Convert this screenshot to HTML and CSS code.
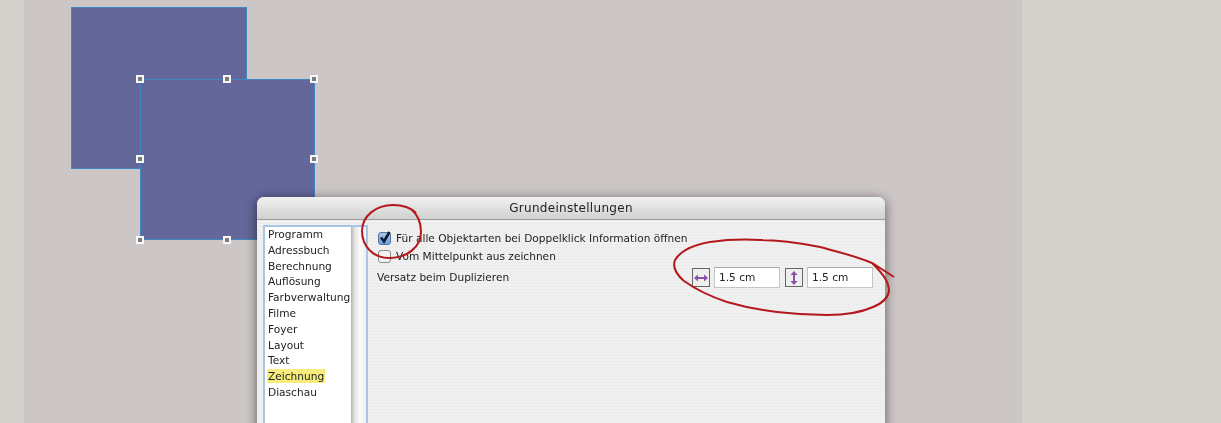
FILE: index.html
```html
<!DOCTYPE html>
<html lang="de">
<head>
<meta charset="utf-8">
<title>Grundeinstellungen</title>
<link rel="stylesheet" href="styles.css">
</head>
<body>
<div class="stage">
  <div class="strip strip-left"></div>
  <main class="canvas">
    <div class="shape shape-back"></div>
    <div class="shape shape-front">
      <i class="handle h-tl"></i><i class="handle h-tc"></i><i class="handle h-tr"></i>
      <i class="handle h-ml"></i><i class="handle h-mr"></i>
      <i class="handle h-bl"></i><i class="handle h-bc"></i>
    </div>
  </main>
  <div class="strip strip-right"></div>

  <section class="dialog">
    <header class="titlebar">Grundeinstellungen</header>
    <div class="dialog-body">
      <nav class="sidebar">
        <ul class="list">
          <li>Programm</li>
          <li>Adressbuch</li>
          <li>Berechnung</li>
          <li>Auflösung</li>
          <li>Farbverwaltung</li>
          <li>Filme</li>
          <li>Foyer</li>
          <li>Layout</li>
          <li>Text</li>
          <li><span class="selected">Zeichnung</span></li>
          <li>Diaschau</li>
        </ul>
        <div class="scrolltrack"></div>
      </nav>
      <div class="panel">
        <div class="check-row">
          <span class="box box-on">
            <svg viewBox="0 0 14 14" width="14" height="14"><path d="M3 6.5 L6 10.5 L11.5 1" fill="none" stroke="#10182c" stroke-width="2.6"/></svg>
          </span>
          <span>Für alle Objektarten bei Doppelklick Information öffnen</span>
        </div>
        <div class="check-row">
          <span class="box"></span>
          <span>Vom Mittelpunkt aus zeichnen</span>
        </div>
        <div class="offset-row">
          <span>Versatz beim Duplizieren</span>
          <div class="fields">
            <span class="icon-btn">
              <svg viewBox="0 0 16 16" width="16" height="16"><path d="M4 8H12" fill="none" stroke="#8a50ac" stroke-width="2"/><path d="M1 8L5 4.5V11.5ZM15 8L11 4.5V11.5Z" fill="#8a50ac"/></svg>
            </span>
            <span class="field">1.5 cm</span>
            <span class="icon-btn icon-btn-v">
              <svg viewBox="0 0 16 16" width="16" height="16"><path d="M8 4V12" fill="none" stroke="#8a50ac" stroke-width="2"/><path d="M8 1L4.5 5H11.5ZM8 15L4.5 11H11.5Z" fill="#8a50ac"/></svg>
            </span>
            <span class="field">1.5 cm</span>
          </div>
        </div>
      </div>
    </div>
  </section>

  <svg class="marks" viewBox="0 0 1221 423" width="1221" height="423" aria-hidden="true">
    <path d="M416 213 C411 208 402 205 393 205 C376 205 362 216 362 231 C362 247 374 258 389 258 C407 258 421 247 421 232 C421 222 417 214 411 209"/>
    <path d="M894 277 L872 263 C856 256 838 252 820 247 C800 243 780 240 760 240 C740 239 724 240 710 242 C692 245 680 252 675 260 C672 268 677 275 684 281 C698 291 712 297 727 302 C744 307 760 310 777 312 C794 314 811 315 827 315 C846 315 862 312 873 307 C883 303 888 298 889 291 C889 280 880 271 872 263"/>
  </svg>
</div>
</body>
</html>
```
FILE: styles.css
```css
* { box-sizing: border-box; }
html, body { margin: 0; padding: 0; }
body { width: 1221px; height: 423px; overflow: hidden; background: #d3cfca; }

.stage {
  position: relative;
  display: flex;
  width: 1221px;
  height: 423px;
  overflow: hidden;
  font-family: "DejaVu Sans", sans-serif;
  font-size: 10.6px;
  color: #222;
  filter: blur(.35px);
}
.strip { background: #d4d0cb; }
.strip-left { flex: 0 0 24px; }
.strip-right { flex: 1 1 auto; }

.canvas {
  position: relative;
  flex: 0 0 998px;
  background: #ccc7c6;
}
.shape {
  position: absolute;
  width: 176px;
  background: #63679a;
  border: 1px solid #3f87c6;
}
.shape-back { left: 47px; top: 7px; height: 162px; }
.shape-front { left: 116px; top: 79px; width: 175px; height: 161px; }

.handle {
  position: absolute;
  width: 8px;
  height: 8px;
  background: #7c7c7c;
  border: 2px solid #f6f6f6;
}
.h-tl { left: -5px; top: -5px; }
.h-tc { left: 82px; top: -5px; }
.h-tr { left: 169px; top: -5px; }
.h-ml { left: -5px; top: 75px; }
.h-mr { left: 169px; top: 75px; }
.h-bl { left: -5px; top: 156px; }
.h-bc { left: 82px; top: 156px; }

.dialog {
  position: absolute;
  left: 257px;
  top: 197px;
  width: 628px;
  height: 300px;
  background: #eeeeee repeating-linear-gradient(0deg, #ececec 0, #ececec 1px, #f0f0f0 1px, #f0f0f0 3px);
  border-radius: 7px 7px 0 0;
  box-shadow: 0 2px 12px rgba(0, 0, 0, .55);
}
.titlebar {
  height: 23px;
  padding-top: 3px;
  text-align: center;
  font-size: 12px;
  line-height: 16px;
  letter-spacing: .3px;
  color: #222;
  background: linear-gradient(#f1f1f1, #d0d0d0);
  border-bottom: 1px solid #9c9c9c;
  border-radius: 7px 7px 0 0;
}
.dialog-body {
  display: flex;
  padding: 5px 0 0 6px;
}
.sidebar {
  display: flex;
  flex: 0 0 105px;
  height: 220px;
  border: 2px solid #a9c5e6;
  border-bottom: 0;
  background: #fff;
}
.list {
  flex: 0 0 86px;
  list-style: none;
  margin: 0;
  padding: 0 0 0 3px;
  line-height: 15.8px;
  white-space: nowrap;
}
.selected { background: #f7ec7c; padding: 1px 1px; margin: 0 -1px; }
.scrolltrack {
  flex: 1 1 auto;
  background: linear-gradient(90deg, #b4b4b4, #e4e4e4 25%, #fbfbfb 60%, #eeeeee);
}

.panel {
  flex: 1 1 auto;
  padding: 4px 12px 0 9px;
}
.check-row {
  display: flex;
  align-items: center;
  gap: 5px;
  height: 18px;
}
.box {
  display: block;
  width: 13px;
  height: 13px;
  margin-left: 1px;
  background: #f3f3f3;
  border: 1px solid #8b8b8b;
  border-radius: 3px;
  overflow: visible;
}
.box svg { display: block; margin: -2px 0 0 -1px; }
.box-on { background: linear-gradient(#a8c8ee, #6a9fe0); border-color: #55739c; }
.offset-row {
  display: flex;
  align-items: center;
  justify-content: space-between;
  height: 21px;
  margin-top: 2px;
  line-height: 19px;
}
.fields {
  display: flex;
  align-items: center;
}
.icon-btn {
  display: flex;
  align-items: center;
  justify-content: center;
  width: 18px;
  height: 19px;
  border: 1px solid #666;
  background: #eeeeee;
  margin-right: 4px;
}
.icon-btn-v { margin-left: 5px; }
.field {
  display: block;
  width: 66px;
  height: 21px;
  padding-left: 4px;
  line-height: 18px;
  background: #fff;
  border: 1px solid #c4c4c4;
  border-top-color: #a8a8a8;
}

.marks {
  position: absolute;
  left: 0;
  top: 0;
  pointer-events: none;
}
.marks path {
  fill: none;
  stroke: #b3191c;
  stroke-width: 2;
}
```
